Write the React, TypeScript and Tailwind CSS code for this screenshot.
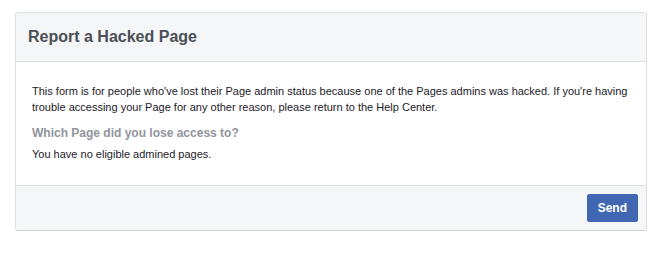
export default function App() {
  return (
    <div className="min-h-screen bg-white pl-[15px] pt-[12px] font-['Liberation_Sans',Arial,sans-serif]">
      <div className="w-[632px] overflow-hidden rounded-[3px] border border-[#dddfe2] border-b-[#cfd1d5]">
        <div className="border-b border-[#dddfe2] bg-[#f5f6f7] px-3 py-[14px]">
          <h1 className="text-[16px] font-bold leading-5 text-[#4b4f56]">Report a Hacked Page</h1>
        </div>
        <div className="bg-white px-4 pb-[23px] pt-[21px] text-[11px] leading-4 text-[#1d2129]">
          <p>
            This form is for people who've lost their Page admin status because one of the Pages admins was hacked.
            If you're having trouble accessing your Page for any other reason, please return to the Help Center.
          </p>
          <h2 className="mt-[10px] text-[12px] font-bold leading-4 text-[#90949c]">
            Which Page did you lose access to?
          </h2>
          <p className="mt-[5px]">You have no eligible admined pages.</p>
        </div>
        <div className="flex justify-end border-t border-[#dddfe2] bg-[#f5f6f7] py-2 pr-2">
          <button
            type="button"
            className="h-7 rounded-[2px] border border-[#4267b2] bg-[#4267b2] px-[10px] text-[12px] font-bold text-white"
          >
            Send
          </button>
        </div>
      </div>
    </div>
  );
}
